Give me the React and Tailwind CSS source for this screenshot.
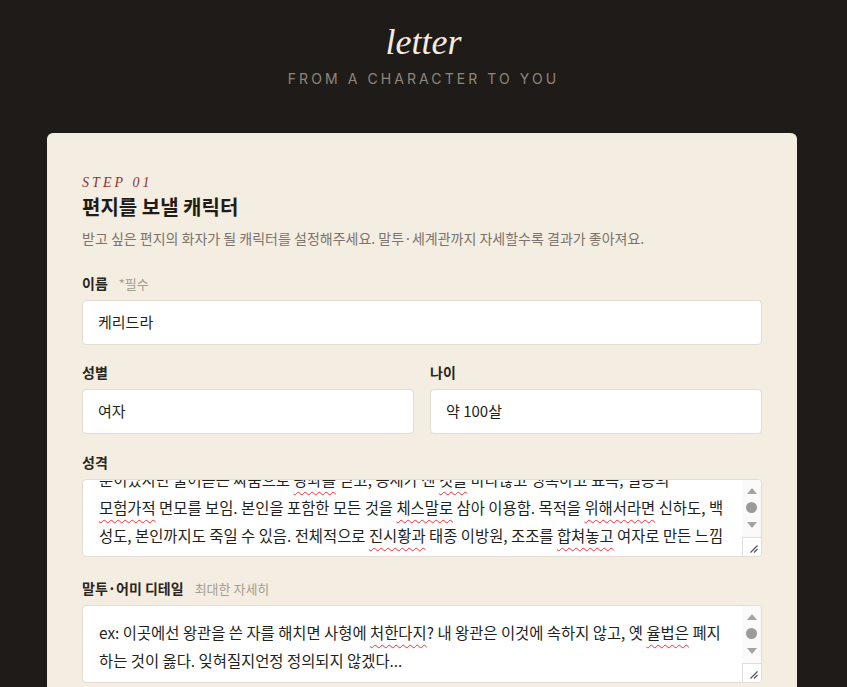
import { useEffect, useRef } from 'react'

const sans = "font-['Noto_Sans_CJK_KR','Noto_Sans',sans-serif]"

function Typo({ children }) {
  return <span className="underline decoration-wavy decoration-red-500 decoration-1 underline-offset-[5px]">{children}</span>
}

function Label({ children, hint }) {
  return (
    <div className="mb-[6px] flex items-baseline gap-[11px]">
      <span className="text-[14px] font-semibold text-[#2a2520]">{children}</span>
      {hint ? <span className="text-[13px] text-[#a59d92]">{hint}</span> : null}
    </div>
  )
}

function Field({ value }) {
  return (
    <div className="flex h-[45px] items-center rounded-[4px] border border-[#e2dcd2] bg-white px-[15px] text-[15px] text-[#231f1b]">
      {value}
    </div>
  )
}

// fake native scrollbar + resize corner, the page's scrollbars are hidden
function Scrollbar() {
  return (
    <div className="flex w-[19px] flex-col bg-[#fafafa]">
      <div className="flex flex-1 flex-col items-center pt-[8px]">
        <svg width="10" height="6" viewBox="0 0 10 6"><path d="M5 0 10 6H0z" fill="#a3a3a3" /></svg>
        <div className="mt-[8px] h-[11px] w-[11px] rounded-full bg-[#9b9b9b]" />
        <svg className="mt-[9px]" width="10" height="6" viewBox="0 0 10 6"><path d="M0 0h10L5 6z" fill="#a3a3a3" /></svg>
      </div>
      <div className="flex h-[19px] items-end justify-end border-t border-l border-[#dedede] bg-white p-[3px]">
        <svg width="9" height="9" viewBox="0 0 9 9">
          <path d="M8.5 1.5 1.5 8.5M8.5 5 5 8.5" stroke="#555" strokeWidth="1.2" />
        </svg>
      </div>
    </div>
  )
}

function Box({ children, toBottom }) {
  const ref = useRef(null)

  useEffect(() => {
    if (toBottom && ref.current) ref.current.scrollTop = ref.current.scrollHeight
  }, [toBottom])

  return (
    <div className="flex h-[78px] overflow-hidden rounded-[4px] border border-[#e2dcd2] bg-white">
      <div
        ref={ref}
        role="textbox"
        className={`flex-1 overflow-hidden px-[16px] pt-[12px] text-[15.4px] leading-[28px] text-[#231f1b] ${toBottom ? 'pb-[7px]' : 'pb-[12px]'}`}
      >
        {children}
      </div>
      <Scrollbar />
    </div>
  )
}

export default function App() {
  return (
    <div className={`min-h-screen bg-[#1e1b18] ${sans}`}>
      <header className="pt-[20px] pb-[44px] text-center">
        <h1 className="font-['Liberation_Serif',serif] text-[36px] italic leading-[44px] text-[#f4ece0]">letter</h1>
        <p className="mt-[4px] font-['Inter',sans-serif] text-[14px] tracking-[0.22em] text-[#8f877c]">FROM A CHARACTER TO YOU</p>
      </header>

      <main className="ml-[47px] w-[750px] rounded-t-[6px] bg-[#f4ede2] px-[35px] pt-[40px] pb-10">
        <p className="font-['Liberation_Serif',serif] text-[14px] italic leading-[20px] tracking-[0.22em] text-[#8e3430]">STEP 01</p>
        <h2 className="text-[20px] font-bold leading-[28px] text-[#1f1b17]">편지를 보낼 캐릭터</h2>
        <p className="mt-[7px] text-[14px] text-[#7c746a]">
          받고 싶은 편지의 화자가 될 캐릭터를 설정해주세요. 말투·세계관까지 자세할수록 결과가 좋아져요.
        </p>

        <div className="mt-[24px]">
          <Label hint="*필수">이름</Label>
          <Field value="케리드라" />
        </div>

        <div className="mt-[17px] grid grid-cols-2 gap-4">
          <div>
            <Label>성별</Label>
            <Field value="여자" />
          </div>
          <div>
            <Label>나이</Label>
            <Field value="약 100살" />
          </div>
        </div>

        <div className="mt-[18px]">
          <Label>성격</Label>
          <Box toBottom>
            냉철하고 계산적이며 야망이 큼. 겉으로는 온화한 미소를 짓지만 속내는 드러내지 않음.<br />
            분이었지만 물어뜯는 싸움으로 <Typo>왕좌를</Typo> 얻고, 공세가 센 <Typo>것을</Typo> 마다않고 냉혹하고 표독, 일종의<br />
            <Typo>모험가적</Typo> 면모를 보임. 본인을 포함한 모든 것을 <Typo>체스말로</Typo> 삼아 이용함. 목적을 <Typo>위해서라면</Typo> 신하도, 백<br />
            성도, 본인까지도 죽일 수 있음. 전체적으로 <Typo>진시황과</Typo> 태종 이방원, 조조를 <Typo>합쳐놓고</Typo> 여자로 만든 느낌
          </Box>
        </div>

        <div className="mt-[21px]">
          <Label hint="최대한 자세히">말투·어미 디테일</Label>
          <Box>
            ex: 이곳에선 왕관을 쓴 자를 해치면 사형에 <Typo>처한다지</Typo>? 내 왕관은 이것에 속하지 않고, 옛 <Typo>율법은</Typo> 폐지<br />
            하는 것이 옳다. 잊혀질지언정 정의되지 않겠다...
          </Box>
        </div>
      </main>
    </div>
  )
}
